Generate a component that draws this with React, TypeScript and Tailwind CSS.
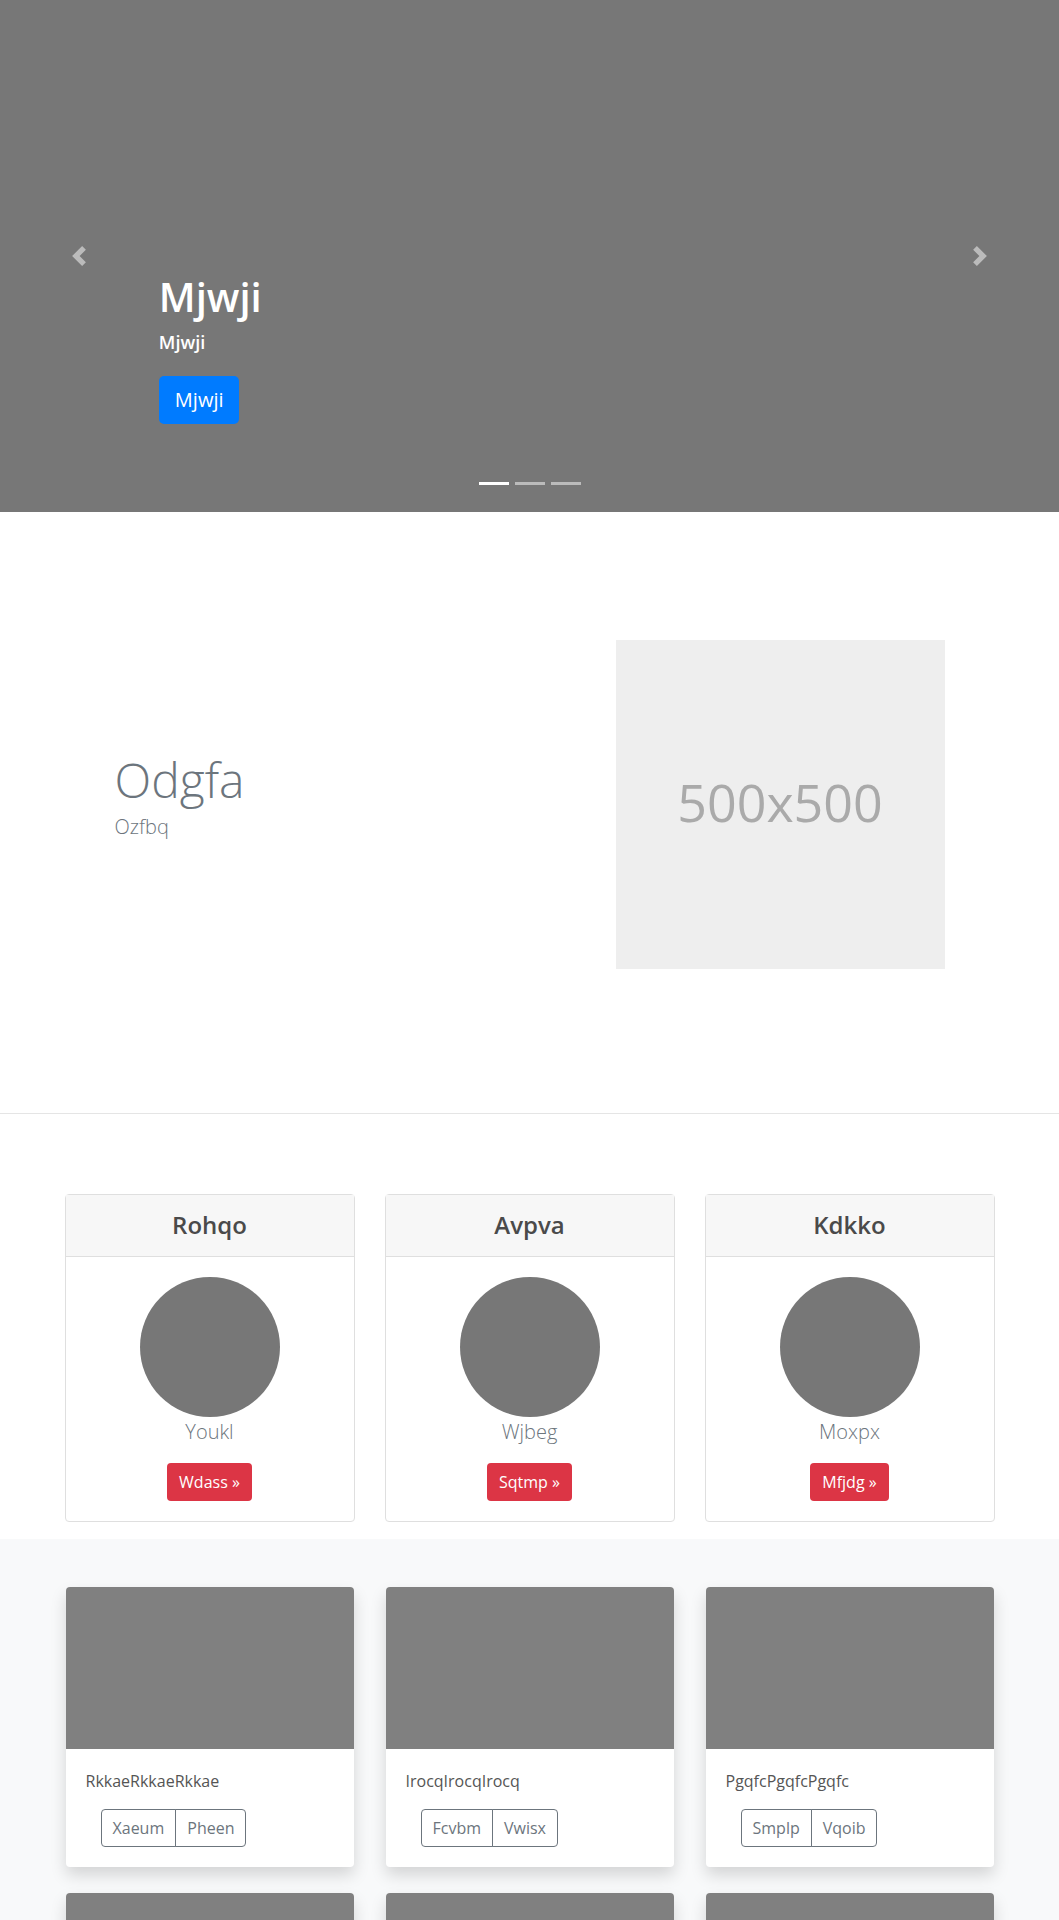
import React from 'react';

const profiles = [
    { title: 'Rohqo', name: 'Youkl', action: 'Wdass' },
    { title: 'Avpva', name: 'Wjbeg', action: 'Sqtmp' },
    { title: 'Kdkko', name: 'Moxpx', action: 'Mfjdg' },
];

const albums = [
    { text: 'RkkaeRkkaeRkkae', left: 'Xaeum', right: 'Pheen' },
    { text: 'IrocqIrocqIrocq', left: 'Fcvbm', right: 'Vwisx' },
    { text: 'PgqfcPgqfcPgqfc', left: 'Smplp', right: 'Vqoib' },
    { text: 'HtuweHtuweHtuwe', left: 'Lmnab', right: 'Qrstu' },
    { text: 'ZxcvbZxcvbZxcvb', left: 'Opwer', right: 'Tyuio' },
    { text: 'BnmkjBnmkjBnmkj', left: 'Asdfg', right: 'Hjklq' },
];

const ChevronLeft = () => (
    <svg width="20" height="20" viewBox="0 0 8 8" fill="#fff">
        <path d="M5.25 0l-4 4 4 4 1.5-1.5L4.25 4l2.5-2.5L5.25 0z" />
    </svg>
);

const ChevronRight = () => (
    <svg width="20" height="20" viewBox="0 0 8 8" fill="#fff">
        <path d="M2.75 0l-1.5 1.5L3.75 4l-2.5 2.5L2.75 8l4-4-4-4z" />
    </svg>
);

const Hero: React.FC = () => (
    <div className="relative flex h-[512px] bg-[#777777]">
        <div className="flex w-[15%] items-center justify-center opacity-50">
            <ChevronLeft />
        </div>
        <div className="flex-1 pt-[273px] text-white">
            <h1 className="mb-2 text-[40px] font-semibold leading-[1.2]">Mjwji</h1>
            <p className="text-[18px] font-semibold leading-[1.5]">Mjwji</p>
            <button className="mt-[20px] h-[48px] rounded-[5px] bg-[#007bff] px-[16px] text-[20px] leading-[1.5] text-white">Mjwji</button>
        </div>
        <div className="flex w-[15%] items-center justify-center opacity-50">
            <ChevronRight />
        </div>
        <div className="absolute bottom-[27px] left-0 right-0 flex justify-center gap-[6px]">
            <span className="h-[3px] w-[30px] bg-white" />
            <span className="h-[3px] w-[30px] bg-white opacity-50" />
            <span className="h-[3px] w-[30px] bg-white opacity-50" />
        </div>
    </div>
);

const Feature: React.FC = () => (
    <div className="border-b border-[#e5e5e5] pb-[144px] pt-[128px]">
        <div className="mx-auto flex w-[960px]">
            <div className="flex w-1/2 flex-col justify-center pl-[65px] text-[#6c757d]">
                <h2 className="mb-1 text-[48px] font-light leading-[1.2]">Odgfa</h2>
                <p className="mb-4 text-[20px] font-light leading-[1.5]">Ozfbq</p>
            </div>
            <div className="flex w-1/2 pl-[86px]">
                <div className="flex h-[329px] w-[329px] items-center justify-center bg-[#eeeeee] pb-[6px] text-[52px] text-[#aaaaaa]">500x500</div>
            </div>
        </div>
    </div>
);

const Profiles: React.FC = () => (
    <div className="pb-[17px] pt-[80px]">
        <div className="mx-auto grid w-[960px] grid-cols-3 gap-[30px] px-[15px]">
            {profiles.map(p => (
                <div key={p.title} className="rounded-[4px] border border-[#dfdfdf] text-center">
                    <div className="h-[62px] border-b border-[#dfdfdf] bg-[#f7f7f7] py-[12px]">
                        <h4 className="text-[24px] font-semibold leading-[1.5] text-[#4a4a4a]">{p.title}</h4>
                    </div>
                    <div className="flex flex-col items-center p-[20px]">
                        <div className="h-[140px] w-[140px] rounded-full bg-[#777777]" />
                        <p className="text-[20px] font-light leading-[1.5] text-[#6c757d]">{p.name}</p>
                        <button className="mt-4 h-[38px] rounded-[4px] bg-[#dc3545] px-[12px] text-[16px] leading-[1.5] text-white">{p.action} »</button>
                    </div>
                </div>
            ))}
        </div>
    </div>
);

const Album: React.FC = () => (
    <div className="bg-[#f8f9fa] py-[48px]">
        <div className="mx-auto grid w-[960px] grid-cols-3 gap-x-[30px] gap-y-[26px] px-[15px]">
            {albums.map(a => (
                <div key={a.text} className="mx-px rounded-[4px] bg-white shadow-[0_8px_16px_rgba(0,0,0,0.15)]">
                    <div className="h-[162px] rounded-t-[4px] bg-[#808080]" />
                    <div className="p-[20px]">
                        <p className="mb-4 text-[16px] leading-[1.5] text-[#555]">{a.text}</p>
                        <div className="ml-[15px] flex">
                            <button className="h-[38px] rounded-l-[4px] border border-[#6c757d] px-[11px] text-[16px] leading-[1.5] text-[#6c757d]">{a.left}</button>
                            <button className="-ml-px h-[38px] rounded-r-[4px] border border-[#6c757d] px-[11px] text-[16px] leading-[1.5] text-[#6c757d]">{a.right}</button>
                        </div>
                    </div>
                </div>
            ))}
        </div>
    </div>
);

export default function App() {
    return (
        <div className="bg-white font-['Open_Sans',sans-serif]">
            <Hero />
            <Feature />
            <Profiles />
            <Album />
        </div>
    );
}
